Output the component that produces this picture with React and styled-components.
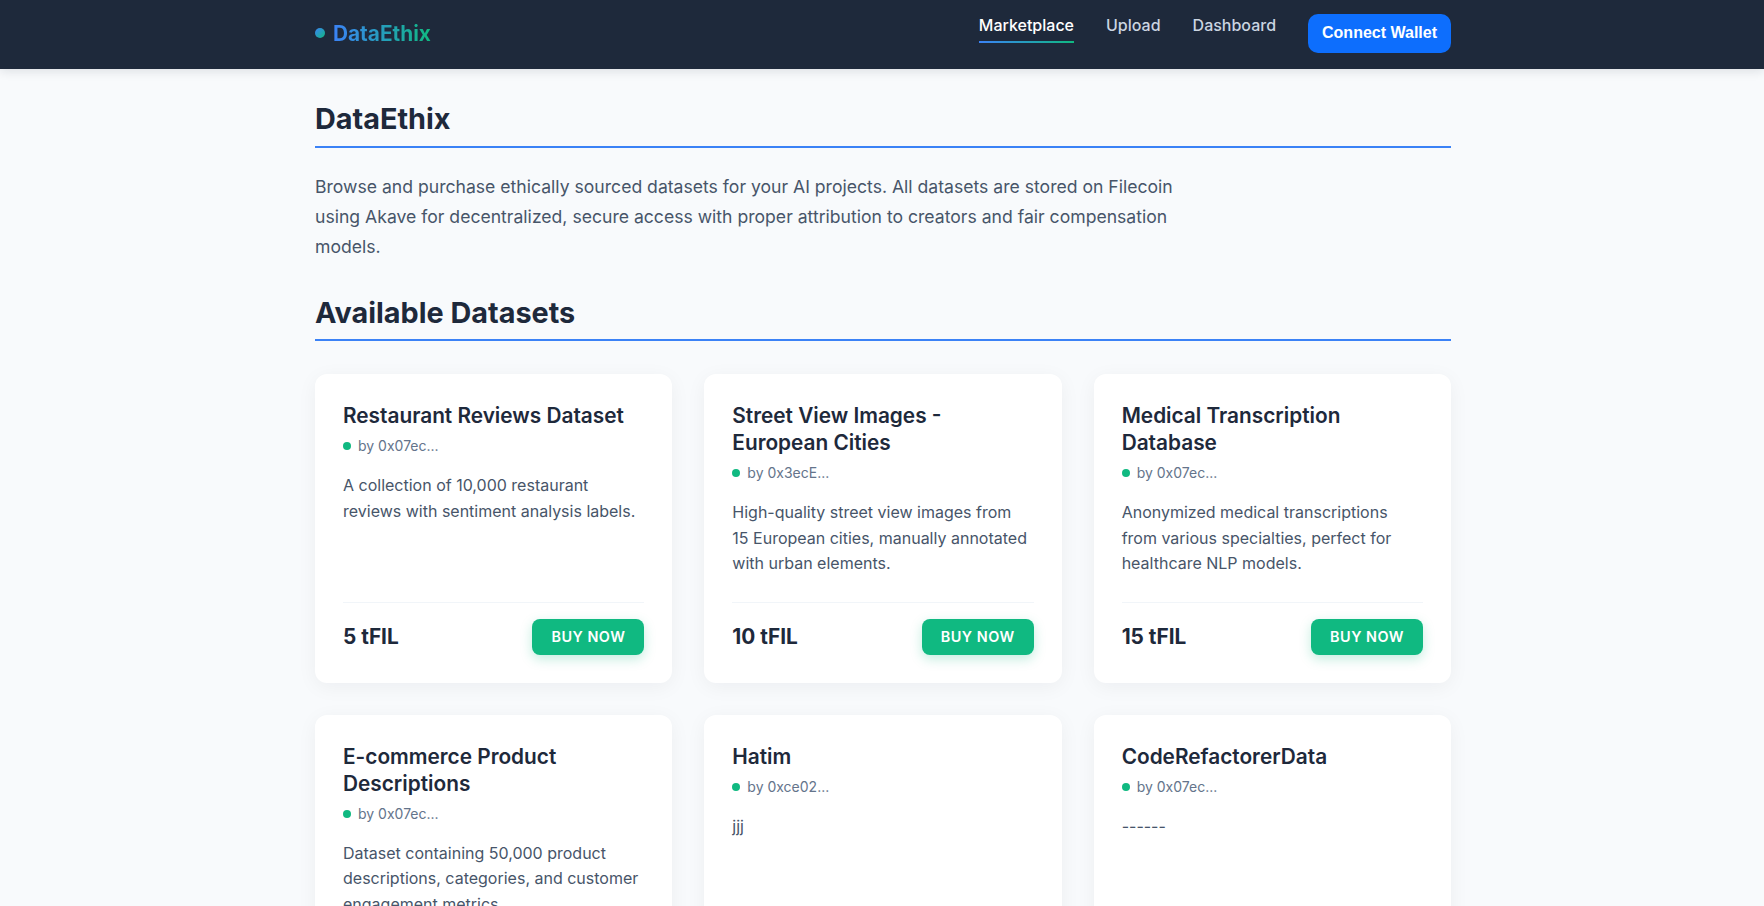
import React from 'react';
import styled, { createGlobalStyle } from 'styled-components';

const GlobalStyle = createGlobalStyle`
  html, body {
    margin: 0;
    padding: 0;
    background: #f8fafc;
    font-family: Inter, "Noto Sans", "Liberation Sans", sans-serif;
    color: #1e293b;
  }
  * { box-sizing: border-box; }
`;

const datasets = [
  {
    title: 'Restaurant Reviews Dataset',
    owner: '0x07ec...',
    description: 'A collection of 10,000 restaurant reviews with sentiment analysis labels.',
    price: 5,
  },
  {
    title: 'Street View Images - European Cities',
    owner: '0x3ecE...',
    description: 'High-quality street view images from 15 European cities, manually annotated with urban elements.',
    price: 10,
  },
  {
    title: 'Medical Transcription Database',
    owner: '0x07ec...',
    description: 'Anonymized medical transcriptions from various specialties, perfect for healthcare NLP models.',
    price: 15,
  },
  {
    title: 'E-commerce Product Descriptions',
    owner: '0x07ec...',
    description: 'Dataset containing 50,000 product descriptions, categories, and customer engagement metrics.',
    price: 8,
  },
  {
    title: 'Hatim',
    owner: '0xce02...',
    description: 'jjj',
    price: 1,
  },
  {
    title: 'CodeRefactorerData',
    owner: '0x07ec...',
    description: '------',
    price: 2,
  },
];

const Header = styled.header`
  background: #1e293b;
  height: 69px;
  box-shadow: 0 2px 10px rgba(15, 23, 42, 0.12);
`;

const HeaderInner = styled.div`
  max-width: 1200px;
  margin: 0 auto;
  padding: 13px 31px 16px 33px;
  height: 100%;
  display: flex;
  align-items: center;
  justify-content: space-between;
`;

const Logo = styled.div`
  display: flex;
  align-items: center;
  gap: 8px;
`;

const LogoDot = styled.span`
  width: 10px;
  height: 10px;
  border-radius: 50%;
  background: linear-gradient(135deg, #3b82f6, #10b981);
`;

const LogoText = styled.span`
  font-size: 20.8px;
  font-weight: 700;
  background: linear-gradient(90deg, #3b82f6, #10b981);
  -webkit-background-clip: text;
  background-clip: text;
  color: transparent;
`;

const Nav = styled.nav`
  display: flex;
  align-items: center;
  gap: 32px;
`;

const NavLink = styled.a`
  position: relative;
  font-size: 16px;
  font-weight: 500;
  line-height: 24px;
  padding-bottom: 6px;
  margin-bottom: 11px;
  color: ${p => (p.$active ? '#ffffff' : '#cbd5e1')};
  text-decoration: none;
  cursor: pointer;

  &::after {
    content: '';
    position: absolute;
    left: 0;
    right: 0;
    bottom: 0;
    height: 2px;
    background: linear-gradient(90deg, #3b82f6, #10b981);
    display: ${p => (p.$active ? 'block' : 'none')};
  }
`;

const WalletButton = styled.button`
  background: #0d6efd;
  color: #fff;
  border: none;
  border-radius: 10px;
  padding: 10px 14px;
  font-family: "Liberation Sans", Arial, sans-serif;
  font-size: 16px;
  font-weight: 700;
  height: 39px;
  cursor: pointer;
`;

const Main = styled.main`
  max-width: 1200px;
  margin: 0 auto;
  padding: 33px 31px 48px 33px;
`;

const SectionTitle = styled.h2`
  margin: 0 0 ${p => p.$gap}px;
  font-size: 28.8px;
  font-weight: 700;
  line-height: 1.2;
  color: #1e293b;
  padding-bottom: 9px;
  border-bottom: 2px solid #3b82f6;
`;

const Intro = styled.p`
  margin: 0 0 34px;
  max-width: 880px;
  font-size: 17.6px;
  line-height: 30px;
  color: #475569;
`;

const Grid = styled.div`
  display: grid;
  grid-template-columns: repeat(3, 1fr);
  gap: 32px;
`;

const Card = styled.div`
  background: #fff;
  border-radius: 12px;
  padding: 28px;
  display: flex;
  flex-direction: column;
  box-shadow: 0 4px 20px rgba(15, 23, 42, 0.05);
`;

const CardTitle = styled.h3`
  margin: 0 0 7px;
  font-size: 20.8px;
  font-weight: 600;
  line-height: 27px;
  color: #1e293b;
`;

const Owner = styled.div`
  display: flex;
  align-items: center;
  gap: 7px;
  font-size: 14px;
  line-height: 20px;
  color: #64748b;
  margin-bottom: 17px;
`;

const OwnerDot = styled.span`
  width: 8px;
  height: 8px;
  border-radius: 50%;
  background: #10b981;
`;

const Description = styled.p`
  margin: 0 0 25px;
  padding-right: 4px;
  font-size: 16px;
  line-height: 25.6px;
  color: #475569;
  flex: 1;
`;

const CardFooter = styled.div`
  display: flex;
  align-items: center;
  justify-content: space-between;
  border-top: 1px solid #f1f5f9;
  padding-top: 16px;
`;

const Price = styled.span`
  font-size: 20.8px;
  font-weight: 700;
  color: #1e293b;
`;

const BuyButton = styled.button`
  background: #10b981;
  color: #fff;
  border: none;
  border-radius: 8px;
  height: 36px;
  padding: 0 19px;
  font-family: Inter, "Noto Sans", sans-serif;
  font-size: 14.4px;
  font-weight: 600;
  letter-spacing: 0.5px;
  text-transform: uppercase;
  box-shadow: 0 4px 12px rgba(16, 185, 129, 0.25);
  cursor: pointer;
`;

export default function App() {
  return (
    <>
      <GlobalStyle />
      <Header>
        <HeaderInner>
          <Logo>
            <LogoDot />
            <LogoText>DataEthix</LogoText>
          </Logo>
          <Nav>
            <NavLink $active>Marketplace</NavLink>
            <NavLink>Upload</NavLink>
            <NavLink>Dashboard</NavLink>
            <WalletButton>Connect Wallet</WalletButton>
          </Nav>
        </HeaderInner>
      </Header>
      <Main>
        <SectionTitle $gap={24}>DataEthix</SectionTitle>
        <Intro>
          Browse and purchase ethically sourced datasets for your AI projects. All datasets are stored on Filecoin
          using Akave for decentralized, secure access with proper attribution to creators and fair compensation
          models.
        </Intro>
        <SectionTitle $gap={33}>Available Datasets</SectionTitle>
        <Grid>
          {datasets.map(d => (
            <Card key={d.title}>
              <CardTitle>{d.title}</CardTitle>
              <Owner>
                <OwnerDot />
                by {d.owner}
              </Owner>
              <Description>{d.description}</Description>
              <CardFooter>
                <Price>{d.price} tFIL</Price>
                <BuyButton>Buy Now</BuyButton>
              </CardFooter>
            </Card>
          ))}
        </Grid>
      </Main>
    </>
  );
}
